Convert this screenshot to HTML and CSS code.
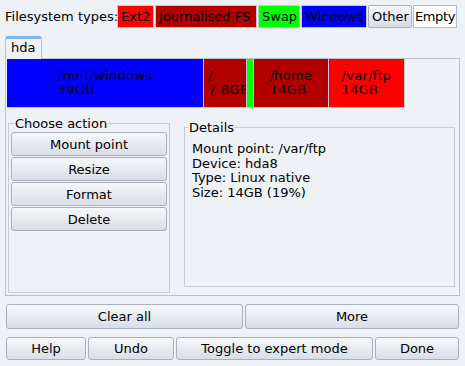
FILE: index.html
```html
<!DOCTYPE html>
<html>
<head>
<meta charset="utf-8">
<link rel="stylesheet" href="styles.css">
</head>
<body>
<div class="types">
  <span class="types-label">Filesystem types:</span>
  <span class="chip ext2">Ext2</span>
  <span class="chip journ">Journalised FS</span>
  <span class="chip swap">Swap</span>
  <span class="chip win">Windows</span>
  <span class="chip other">Other</span>
  <span class="chip empty">Empty</span>
</div>
<div class="notebook">
  <div class="tabs"><div class="tab">hda</div></div>
  <div class="panel">
    <div class="bar">
      <div class="part win" style="width:196px"><span class="ptext">/mnt/windows<br>39GB</span></div>
      <div class="part journ narrow" style="width:42px"><span class="ptext">/<br>7.8GB</span></div>
      <div class="part swap" style="width:6px"></div>
      <div class="part journ" style="width:74px"><span class="ptext">/home<br>14GB</span></div>
      <div class="part ext2" style="width:75px"><span class="ptext">/var/ftp<br>14GB</span></div>
    </div>
    <div class="lower">
      <fieldset class="actions">
        <legend>Choose action</legend>
        <button class="btn">Mount point</button>
        <button class="btn">Resize</button>
        <button class="btn">Format</button>
        <button class="btn">Delete</button>
      </fieldset>
      <fieldset class="details">
        <legend>Details</legend>
        <div class="info">Mount point: /var/ftp<br>Device: hda8<br>Type: Linux native<br>Size: 14GB (19%)</div>
      </fieldset>
    </div>
  </div>
</div>
<div class="row row1">
  <button class="btn clear">Clear all</button>
  <button class="btn more">More</button>
</div>
<div class="row row2">
  <button class="btn help">Help</button>
  <button class="btn undo">Undo</button>
  <button class="btn toggle">Toggle to expert mode</button>
  <button class="btn done">Done</button>
</div>
</body>
</html>
```
FILE: styles.css
```css
html, body {
  margin: 0;
  padding: 0;
  background: #eef1f6;
  font-family: "DejaVu Sans", sans-serif;
  font-size: 13px;
  color: #000;
}
.types {
  display: flex;
  align-items: center;
  padding: 5px 0 0 5px;
  height: 23px;
}
.types-label {
  width: 112px;
  white-space: nowrap;
}
.chip {
  box-sizing: border-box;
  flex: none;
  min-width: 0;
  height: 23px;
  line-height: 21px;
  border: 1px solid #c3c9d2;
  padding: 0 3px;
  margin-right: 1px;
  white-space: nowrap;
  overflow: hidden;
}
.ext2 { background: #ff0000; }
.journ { background: #b00000; }
.swap { background: #00ff00; }
.win { background: #0000ff; }
.chip.other {
  background: linear-gradient(#f4f6f9, #d8dde5);
  border-color: #a9b0bb;
  border-radius: 2px;
}
.chip.empty {
  background: #ffffff;
  border-color: #b5bcc6;
}
.chip.ext2 { width: 37px; }
.chip.journ { width: 102px; }
.chip.swap { width: 42px; }
.chip.win { width: 66px; }
.chip.other { width: 44px; }
.chip.empty { width: 44px; padding: 0; text-align: center; letter-spacing: -0.4px; }

.notebook {
  margin-top: 8px;
}
.tabs {
  display: flex;
  padding-left: 5px;
  height: 23px;
  margin-bottom: -1px;
  position: relative;
  z-index: 1;
}
.tab {
  box-sizing: border-box;
  width: 37px;
  height: 23px;
  border: 1px solid #b9c0ca;
  border-top: 3px solid #7fb3ea;
  border-bottom: none;
  border-radius: 3px 3px 0 0;
  padding-left: 5px;
  line-height: 18px;
  background: #eef1f6;
}
.panel {
  box-sizing: border-box;
  margin: 0 5px 0 5px;
  height: 238px;
  border: 1px solid #b9c0ca;
  padding: 0 0 0 1px;
}
.bar {
  display: flex;
  height: 49px;
}
.part {
  box-sizing: content-box;
  border-right: 1px solid #c3cad4;
  border-bottom: 1px solid #c3cad4;
  overflow: hidden;
  white-space: nowrap;
  display: flex;
  align-items: center;
}
.part .ptext {
  display: block;
  margin: 0 auto;
  line-height: 14px;
  padding: 0 4px;
  letter-spacing: 0.3px;
}
.part.narrow .ptext {
  margin: 0;
}
.lower {
  display: flex;
  align-items: flex-start;
  margin-top: 8px;
}
fieldset {
  margin: 0;
  border: 1px solid #c7ccd4;
  min-width: 0;
}
legend {
  padding: 0 1px;
  line-height: 15px;
}
.actions {
  width: 162px;
  box-sizing: border-box;
  height: 177px;
  padding: 1px 2px 0 2px;
  display: flex;
  flex-direction: column;
  gap: 1px;
  margin-left: 1px;
}
.actions legend {
  margin-left: 3px;
}
.details {
  box-sizing: border-box;
  width: 271px;
  height: 167px;
  margin-left: 14px;
  margin-top: 4px;
  padding: 7px 7px 5px 7px;
}
.details legend {
  margin-left: -4px;
}
.info {
  line-height: 14.7px;
}
.btn {
  box-sizing: border-box;
  font-family: "DejaVu Sans", sans-serif;
  font-size: 13px;
  color: #000;
  background: linear-gradient(#f5f7fa, #d9dee6);
  border: 1px solid #a9b0bb;
  border-radius: 3px;
  padding: 0;
  height: 24px;
}
.actions .btn {
  width: 100%;
}
.row {
  display: flex;
  padding: 0 6px 0 6px;
}
.row1 {
  margin-top: 8px;
  gap: 2px;
}
.row1 .btn { height: 25px; }
.clear { width: 237px; }
.more { flex: 1; }
.row2 {
  margin-top: 8px;
  gap: 2px;
}
.row2 .btn { height: 23px; }
.help { width: 80px; }
.undo { width: 86px; }
.toggle { width: 197px; }
.done { flex: 1; }
```
